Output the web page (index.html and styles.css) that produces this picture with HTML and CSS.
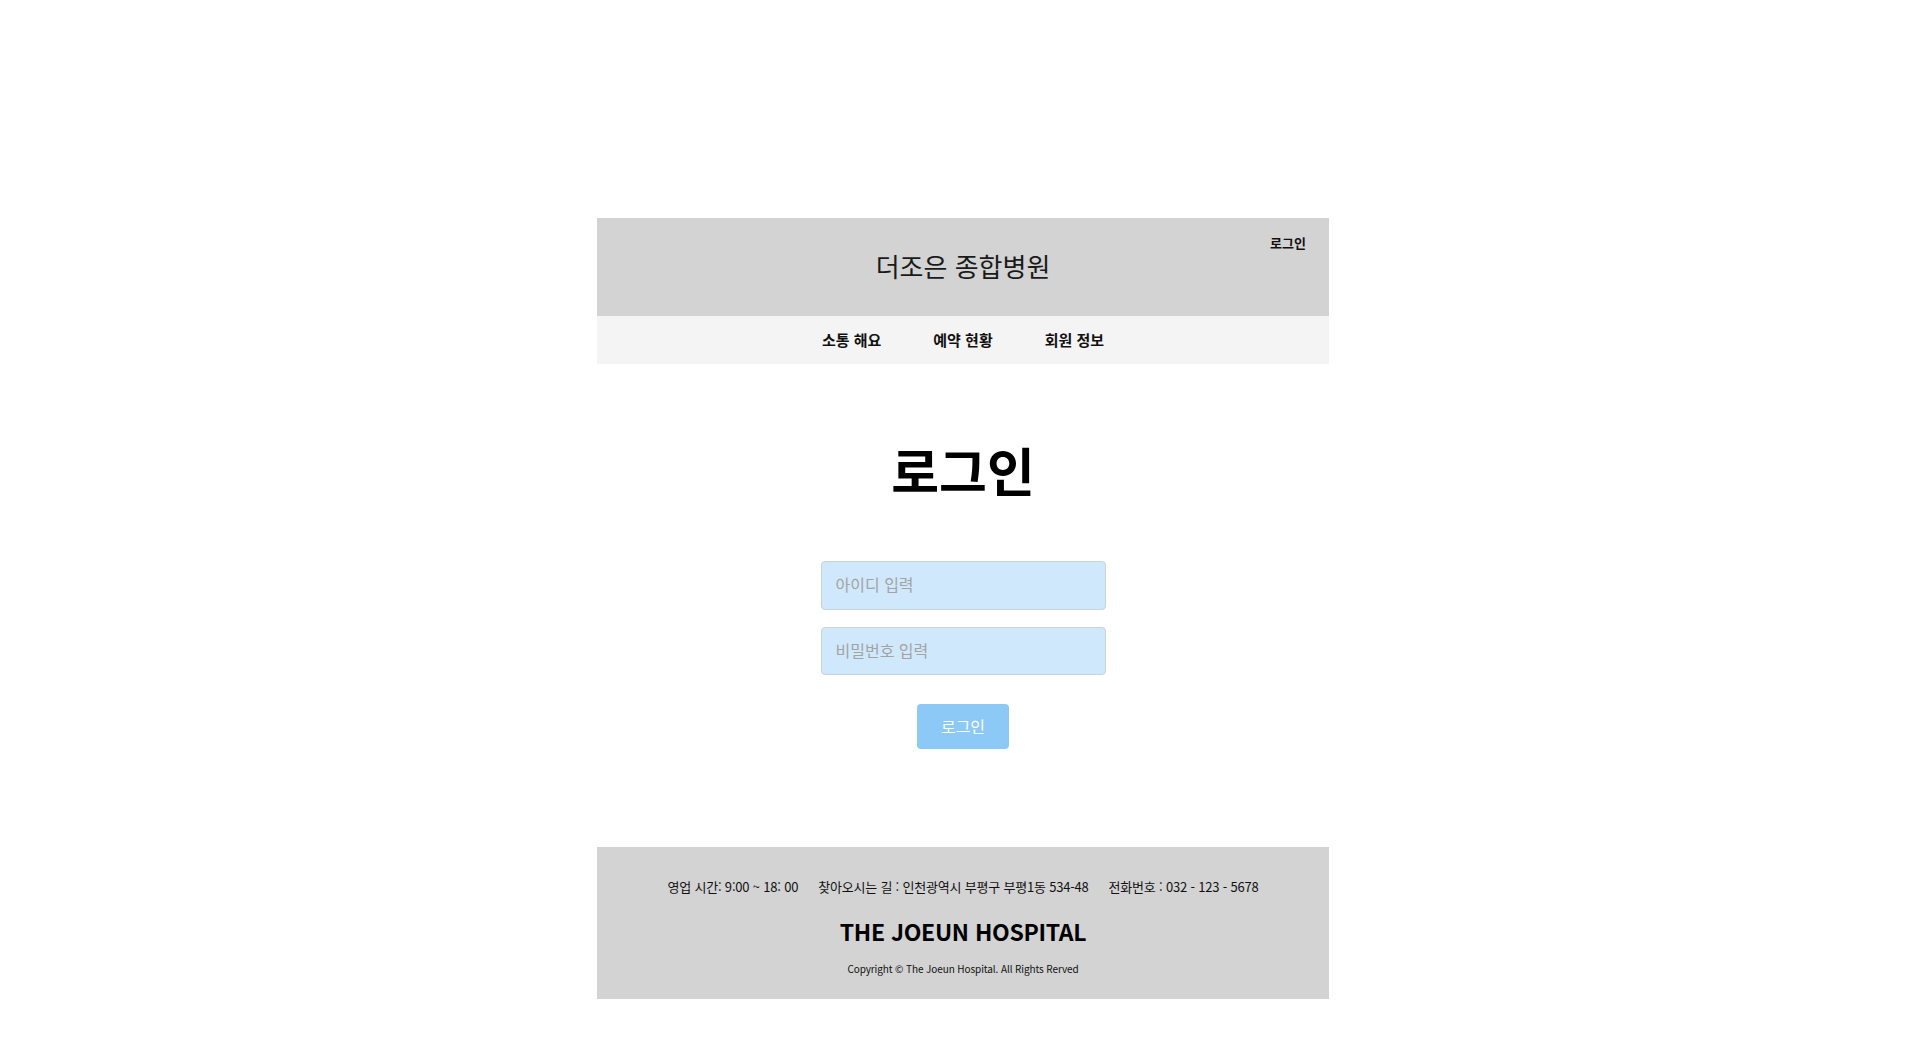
FILE: index.html
```html
<!DOCTYPE html>
<html lang="ko">
<head>
<meta charset="utf-8">
<title>로그인 - 더조은 종합병원</title>
<link rel="stylesheet" href="styles.css">
</head>
<body>
<div class="wrap">
  <header class="site-header">
    <h2 class="brand">더조은 종합병원</h2>
    <a class="top-login" href="#">로그인</a>
  </header>
  <nav class="gnb">
    <a href="#">소통 해요</a>
    <a href="#">예약 현황</a>
    <a href="#">회원 정보</a>
  </nav>
  <main class="login">
    <h1 class="login-title">로그인</h1>
    <form class="login-form">
      <input class="field" type="text" placeholder="아이디 입력">
      <input class="field" type="password" placeholder="비밀번호 입력">
      <button class="btn" type="button">로그인</button>
    </form>
  </main>
  <footer class="site-footer">
    <p class="info">
      <span>영업 시간: 9:00 ~ 18: 00</span>
      <span>찾아오시는 길 : 인천광역시 부평구 부평1동 534-48</span>
      <span>전화번호 : 032 - 123 - 5678</span>
    </p>
    <p class="logo">THE JOEUN HOSPITAL</p>
    <p class="copy">Copyright &copy; The Joeun Hospital. All Rights Rerved</p>
  </footer>
</div>
</body>
</html>
```

FILE: styles.css
```css
* { box-sizing: border-box; }
html, body { margin: 0; padding: 0; background: #fff; }
body {
  font-family: "Noto Sans CJK KR", "Noto Sans", sans-serif;
  color: #111;
}
.wrap {
  width: 732px;
  margin: 0 auto;
  padding-top: 218px;
}
.site-header {
  position: relative;
  height: 98px;
  background: #d3d3d3;
  display: flex;
  align-items: center;
  justify-content: center;
}
.brand {
  margin: 0;
  font-size: 26px;
  font-weight: 400;
  line-height: 30px;
  color: #1a1a1a;
  padding-bottom: 2px;
}
.top-login {
  position: absolute;
  top: 15px;
  right: 23px;
  font-size: 13px;
  font-weight: 700;
  line-height: 20px;
  color: #111;
  text-decoration: none;
}
.gnb {
  height: 48px;
  background: #f4f4f4;
  display: flex;
  align-items: center;
  justify-content: center;
  gap: 52px;
}
.gnb a {
  font-size: 15px;
  font-weight: 700;
  color: #111;
  text-decoration: none;
  line-height: 20px;
}
.login {
  display: flex;
  flex-direction: column;
  align-items: center;
  padding-top: 75px;
  padding-bottom: 98px;
}
.login-title {
  margin: 0;
  font-size: 52px;
  font-weight: 700;
  line-height: 62px;
  color: #000;
}
.login-form {
  margin-top: 60px;
  display: flex;
  flex-direction: column;
  align-items: center;
}
.field {
  width: 285px;
  height: 49px;
  margin: 0 0 17px;
  padding: 0 14px 3px;
  border: 1px solid #c9d3da;
  border-radius: 4px;
  background: #d0e8fb;
  font-family: inherit;
  font-size: 16px;
  color: #333;
  outline: none;
}
.field:last-of-type { height: 48px; margin-bottom: 29px; }
.field::placeholder { color: #a3a3a3; }
.btn {
  width: 92px;
  height: 45px;
  padding: 0 0 2px;
  border: 0;
  border-radius: 4px;
  background: #8dc9f6;
  color: #fff;
  font-family: inherit;
  font-size: 16px;
  cursor: pointer;
}
.site-footer {
  height: 152px;
  background: #d3d3d3;
  padding-top: 30px;
  text-align: center;
  color: #111;
}
.site-footer p { margin: 0; }
.info {
  font-size: 13px;
  line-height: 20px;
  display: flex;
  justify-content: center;
  gap: 20px;
  letter-spacing: -0.2px;
}
.logo {
  margin-top: 19px !important;
  font-size: 23px;
  font-weight: 700;
  line-height: 30px;
  color: #000;
  letter-spacing: -0.3px;
}
.copy {
  margin-top: 15px !important;
  font-size: 10px;
  line-height: 16px;
  letter-spacing: -0.1px;
}
```
